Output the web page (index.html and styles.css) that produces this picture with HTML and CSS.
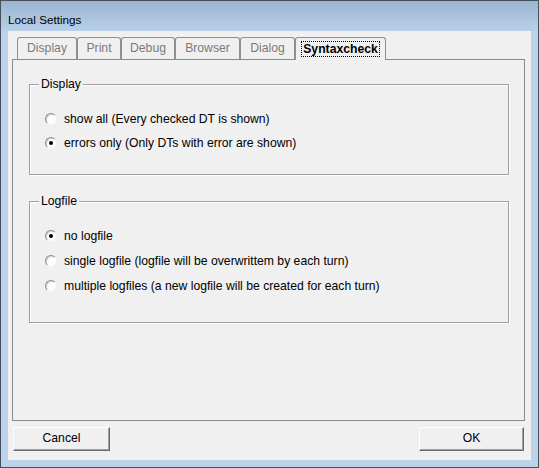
FILE: index.html
```html
<!DOCTYPE html>
<html>
<head>
<meta charset="utf-8">
<title>Local Settings</title>
<link rel="stylesheet" href="styles.css">
</head>
<body>
<div class="window">
  <div class="titlebar">Local Settings</div>
  <div class="client">
    <div class="tabs">
      <div class="tab tab-display">Display</div>
      <div class="tab tab-print">Print</div>
      <div class="tab tab-debug">Debug</div>
      <div class="tab tab-browser">Browser</div>
      <div class="tab tab-dialog">Dialog</div>
      <div class="tab tab-syntax active"><span class="focus">Syntaxcheck</span></div>
    </div>
    <div class="panel">
      <div class="group group-display">
        <div class="group-title">Display</div>
        <div class="options">
          <div class="option"><span class="radio"></span>show all (Every checked DT is shown)</div>
          <div class="option"><span class="radio checked"></span>errors only (Only DTs with error are shown)</div>
        </div>
      </div>
      <div class="group group-log">
        <div class="group-title">Logfile</div>
        <div class="options">
          <div class="option"><span class="radio checked"></span>no logfile</div>
          <div class="option"><span class="radio"></span>single logfile (logfile will be overwrittem by each turn)</div>
          <div class="option"><span class="radio"></span>multiple logfiles (a new logfile will be created for each turn)</div>
        </div>
      </div>
    </div>
    <div class="buttons">
      <div class="btn btn-cancel">Cancel</div>
      <div class="btn btn-ok">OK</div>
    </div>
  </div>
</div>
</body>
</html>
```
FILE: styles.css
```css
html, body {
  margin: 0;
  padding: 0;
  background: #ffffff;
}

body {
  font-family: "Liberation Sans", Arial, sans-serif;
  font-size: 12.2px;
  color: #000;
}

.window {
  width: 539px;
  height: 468px;
  box-sizing: border-box;
  border: 1px solid #46515d;
  background: #bcd3ea;
  display: flex;
  flex-direction: column;
}

.titlebar {
  height: 30px;
  box-sizing: border-box;
  padding: 11px 0 0 7px;
  line-height: 16px;
  font-size: 11.7px;
  background: linear-gradient(#9bb4d0, #b9d0e9);
  color: #000;
}

.client {
  flex: 1;
  margin: 0 7px 7px 7px;
  background: #f0f0f0;
  padding: 6px 6px 0 4px;
  display: flex;
  flex-direction: column;
}

.tabs {
  display: flex;
  align-items: flex-end;
  height: 22px;
  margin-left: 5px;
}

.tab {
  box-sizing: border-box;
  height: 22px;
  border: 1px solid #8e8f90;
  border-bottom: none;
  border-radius: 3px 3px 0 0;
  line-height: 20px;
  text-align: center;
  color: #7a7a7a;
}

.tab-display { width: 60px; }
.tab-print { width: 44px; }
.tab-debug { width: 54px; }
.tab-browser { width: 65px; }
.tab-dialog { width: 55px; }
.tab-syntax { width: 91px; }

.tab.active {
  position: relative;
  z-index: 1;
  height: 23px;
  margin-bottom: -1px;
  background: #f0f0f0;
  color: #000;
  font-weight: bold;
  padding-top: 3px;
  line-height: 14px;
}

.focus {
  display: inline-block;
  border: 1px dotted #000;
  padding: 0 1px;
}

.panel {
  height: 362px;
  box-sizing: border-box;
  border: 1px solid #898b8e;
  padding: 24px 15px 0 16px;
}

.group {
  width: 480px;
  box-sizing: border-box;
  border: 1px solid #a0a0a0;
  box-shadow: 1px 1px 0 #ffffff, inset 1px 1px 0 #ffffff;
}

.group-log {
  margin-top: 26px;
}

.group-title {
  width: fit-content;
  margin: -8px 0 0 9px;
  padding: 0 2px;
  line-height: 15px;
  background: #f0f0f0;
}

.group-display .options {
  padding: 15px 0 19px 15px;
}

.group-display .option {
  height: 24px;
}

.group-log .options {
  padding: 14px 0 24px 15px;
}

.group-log .option {
  height: 25px;
}

.option {
  display: flex;
  align-items: center;
}

.radio {
  width: 12px;
  height: 12px;
  box-sizing: border-box;
  border-radius: 50%;
  border: 1px solid;
  border-color: #8c8c8c #f4f4f4 #f4f4f4 #8c8c8c;
  background: #fdfdfd;
  box-shadow: inset 1px 1px 0 #d4d4d4;
  margin-right: 7px;
  display: flex;
  align-items: center;
  justify-content: center;
}

.radio.checked::after {
  content: "";
  width: 4px;
  height: 4px;
  border-radius: 50%;
  background: #000;
}

.buttons {
  display: flex;
  justify-content: space-between;
  margin-top: 6px;
}

.btn {
  height: 24px;
  box-sizing: border-box;
  border: 1px solid;
  border-color: #ffffff #696969 #696969 #ffffff;
  box-shadow: inset -1px -1px 0 #a0a0a0;
  background: #f0f0f0;
  text-align: center;
  line-height: 21px;
}

.btn-cancel {
  width: 97px;
  margin-left: 1px;
}

.btn-ok {
  width: 105px;
  margin-right: 1px;
}
```
